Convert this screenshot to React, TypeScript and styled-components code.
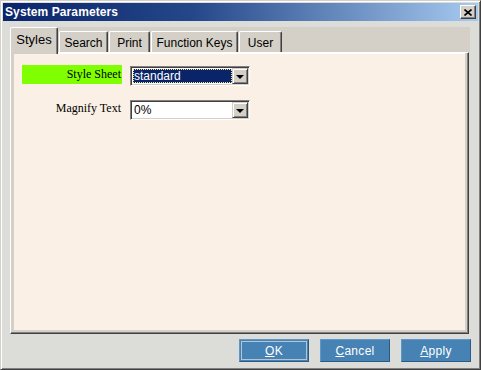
import React from "react";
import styled, { createGlobalStyle, css } from "styled-components";

const GlobalStyle = createGlobalStyle`
  html, body {
    margin: 0;
    padding: 0;
    background: #dcdcd8;
  }
`;

const Window = styled.div`
  width: 481px;
  height: 370px;
  box-sizing: border-box;
  border: 1px solid;
  border-color: #d4d0c8 #404040 #404040 #d4d0c8;
  box-shadow: inset 1px 1px #ffffff, inset -1px -1px #808080;
  padding: 2px;
  background: #dcdcd8;
  display: flex;
  flex-direction: column;
  font-family: "Liberation Sans", Arial, sans-serif;
`;

const TitleBar = styled.div`
  height: 18px;
  display: flex;
  align-items: center;
  justify-content: space-between;
  padding: 0 2px 0 2px;
  background: linear-gradient(to right, #0a246a 0%, #25478a 40%, #a6caf0 100%);
`;

const Title = styled.span`
  color: #ffffff;
  font-weight: bold;
  font-size: 12px;
  letter-spacing: 0.1px;
`;

const CloseButton = styled.div`
  width: 16px;
  height: 14px;
  box-sizing: border-box;
  background: #d4d0c8;
  border: 1px solid;
  border-color: #ffffff #404040 #404040 #ffffff;
  box-shadow: inset -1px -1px #808080;
  display: flex;
  align-items: center;
  justify-content: center;
`;

const TabStrip = styled.div`
  margin: 6px 0 0 7px;
  width: 460px;
  height: 25px;
  background: #d4d0c8;
  display: flex;
  align-items: flex-end;
  position: relative;
  z-index: 1;
`;

const Tab = styled.div<{ $active?: boolean; $width: number }>`
  width: ${(p) => p.$width}px;
  box-sizing: border-box;
  margin-right: 1px;
  background: #d4d0c8;
  border-top: 1px solid #ffffff;
  border-left: 1px solid #ffffff;
  border-right: 1px solid #404040;
  box-shadow: inset -1px 0 #808080;
  border-top-left-radius: 2px;
  border-top-right-radius: 2px;
  font-size: 12px;
  color: #000000;
  display: flex;
  justify-content: center;
  ${(p) =>
    p.$active
      ? css`
          height: 27px;
          margin-bottom: -2px;
          padding-top: 4px;
          font-size: 13px;
        `
      : css`
          height: 21px;
          padding-top: 4px;
        `}
`;

const Panel = styled.div`
  margin-left: 7px;
  width: 459px;
  height: 282px;
  box-sizing: border-box;
  border: 1px solid;
  border-color: #ffffff #404040 #404040 #ffffff;
  box-shadow: inset -1px -1px #808080;
  padding: 0 3px 3px 3px;
  background: #d4d0c8;
`;

const Content = styled.div`
  height: 100%;
  box-sizing: border-box;
  background: #faf0e6;
  border-top: 1px solid #ffffff;
  padding: 11px 8px;
  display: flex;
  flex-direction: column;
  gap: 13px;
`;

const Row = styled.div`
  display: flex;
  align-items: flex-start;
  gap: 8px;
`;

const Label = styled.div<{ $highlight?: boolean }>`
  width: 100px;
  height: 19px;
  line-height: 19px;
  padding-right: 1px;
  box-sizing: border-box;
  text-align: right;
  font-family: "Liberation Serif", "Times New Roman", serif;
  font-size: 12px;
  color: #000000;
  background: ${(p) => (p.$highlight ? "#80ff00" : "transparent")};
`;

const SelectBox = styled.div`
  margin-top: 1px;
  width: 120px;
  height: 20px;
  box-sizing: border-box;
  border: 1px solid;
  border-color: #808080 #ffffff #ffffff #808080;
  box-shadow: inset 1px 1px #404040, inset -1px -1px #d4d0c8;
  background: #ffffff;
  padding: 2px;
  display: flex;
`;

const SelectValue = styled.div<{ $focused?: boolean }>`
  flex: 1;
  font-size: 12px;
  line-height: 14px;
  padding-left: 1px;
  box-sizing: border-box;
  ${(p) =>
    p.$focused
      ? css`
          background: #0a246a;
          color: #ffffff;
          outline: 1px dotted #ffe680;
          outline-offset: -1px;
        `
      : css`
          color: #000000;
        `}
`;

const DropButton = styled.div`
  width: 16px;
  height: 16px;
  margin: -1px -1px 0 0;
  box-sizing: border-box;
  background: #d4d0c8;
  border: 1px solid;
  border-color: #d4d0c8 #404040 #404040 #d4d0c8;
  box-shadow: inset 1px 1px #ffffff, inset -1px -1px #808080;
  display: flex;
  align-items: center;
  justify-content: center;
`;

const Arrow = styled.div`
  width: 0;
  height: 0;
  border-left: 4px solid transparent;
  border-right: 4px solid transparent;
  border-top: 4px solid #000000;
  margin-top: 1px;
`;

const ButtonBar = styled.div`
  display: flex;
  justify-content: flex-end;
  gap: 11px;
  margin: 5px 7px 0 0;
`;

const Button = styled.div<{ $default?: boolean }>`
  width: 70px;
  height: 23px;
  box-sizing: border-box;
  background: #4682b4;
  border: 1px solid;
  border-color: #5e98c8 #2c5a86 #2c5a86 #5e98c8;
  color: #ffffff;
  font-size: 12px;
  display: flex;
  align-items: center;
  justify-content: center;
  letter-spacing: 0.3px;
  ${(p) =>
    p.$default &&
    css`
      box-shadow: inset 0 0 0 1px #4682b4, inset 0 0 0 2px #b8c4d0;
    `}
`;

const tabs = [
  { label: "Styles", width: 48 },
  { label: "Search", width: 49 },
  { label: "Print", width: 41 },
  { label: "Function Keys", width: 87 },
  { label: "User", width: 43 },
];

function Select({ value, focused }: { value: string; focused?: boolean }) {
  return (
    <SelectBox>
      <SelectValue $focused={focused}>{value}</SelectValue>
      <DropButton>
        <Arrow />
      </DropButton>
    </SelectBox>
  );
}

export default function App() {
  return (
    <>
      <GlobalStyle />
      <Window>
        <TitleBar>
          <Title>System Parameters</Title>
          <CloseButton>
            <svg width="8" height="7" viewBox="0 0 8 7">
              <path d="M0.5 0.5 L7.5 6.5 M7.5 0.5 L0.5 6.5" stroke="#000" strokeWidth="1.6" />
            </svg>
          </CloseButton>
        </TitleBar>
        <TabStrip>
          {tabs.map((t, i) => (
            <Tab key={t.label} $active={i === 0} $width={t.width}>
              {t.label}
            </Tab>
          ))}
        </TabStrip>
        <Panel>
          <Content>
            <Row>
              <Label $highlight>Style Sheet</Label>
              <Select value="standard" focused />
            </Row>
            <Row>
              <Label>Magnify Text</Label>
              <Select value="0%" />
            </Row>
          </Content>
        </Panel>
        <ButtonBar>
          <Button $default>
            <u>O</u>K
          </Button>
          <Button>
            <u>C</u>ancel
          </Button>
          <Button>
            <u>A</u>pply
          </Button>
        </ButtonBar>
      </Window>
    </>
  );
}
